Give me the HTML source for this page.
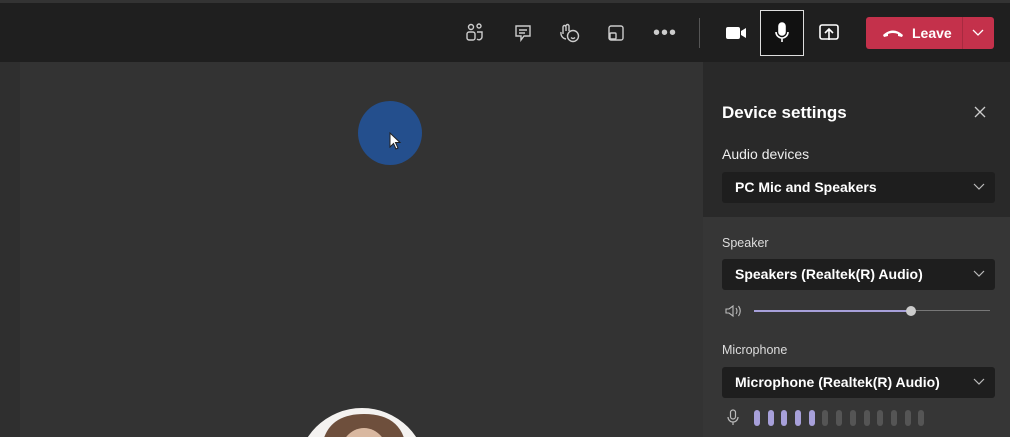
<!DOCTYPE html>
<html style="width:1010px;height:437px;overflow:hidden"><head><style>
html,body{margin:0;width:1010px;height:437px;overflow:hidden}
body{background:#333;font-family:"Liberation Sans",sans-serif;position:relative}
.a{position:absolute}
.top{left:0;top:0;width:1010px;height:62px;background:#1f1f1f;border-top:3px solid #333;box-sizing:border-box}
.dd{position:absolute;left:722px;width:273px;height:31px;background:#1e1e1e;border-radius:3px;color:#fff;font-weight:bold;font-size:14px;line-height:31px;box-sizing:border-box;padding-left:13px}
.dd svg{position:absolute;right:10px;top:11px}
.lbl{color:#ddd;font-size:12.5px;position:absolute;left:722px}
</style></head><body>
<div class="a top"></div>
<div class="a" style="left:0;top:62px;width:20px;height:375px;background:#2f2f2f"></div>
<div class="a" style="left:703px;top:62px;width:307px;height:155px;background:#292929"></div>
<div class="a" style="left:703px;top:217px;width:307px;height:220px;background:#363636"></div>
<div class="a" style="left:358px;top:101px;width:64px;height:64px;border-radius:50%;background:#244f8d"></div>
<svg class="a" style="left:389px;top:132px" width="14" height="20" viewBox="0 0 14 20"><path d="M1 1 L1 15 L4.5 11.5 L7 17 L9 16 L6.5 10.5 L11 10.5 Z" fill="#fff" stroke="#222" stroke-width="1"/></svg>
<svg class="a" style="left:297px;top:408px" width="130" height="29" viewBox="0 0 130 29"><circle cx="65" cy="65" r="65" fill="#f4f2f0"/><path d="M24 50 Q24 6 67 6 Q110 6 110 50 V90 H24Z" fill="#6e4f3c"/><ellipse cx="67" cy="50" rx="25" ry="30" fill="#d9b8a0"/></svg>
<svg class="a" style="left:464px;top:22px" width="22" height="22" viewBox="0 0 22 22" fill="none" stroke="#ccc" stroke-width="1.4"><circle cx="7" cy="5" r="2.5"/><circle cx="15" cy="4" r="2"/><rect x="3" y="10" width="8" height="8" rx="2"/><path d="M13 10h5v5a3 3 0 0 1-5 2"/></svg>
<svg class="a" style="left:513px;top:23px" width="20" height="20" viewBox="0 0 20 20" fill="none" stroke="#ccc" stroke-width="1.4"><path d="M3 3h14v10h-6l-3 4v-4H3z"/><path d="M6 7h8M6 10h6"/></svg>
<svg class="a" style="left:558px;top:22px" width="24" height="22" viewBox="0 0 24 22" fill="none" stroke="#ccc" stroke-width="1.4"><path d="M5 12V5a1.5 1.5 0 0 1 3 0v4M8 4a1.5 1.5 0 0 1 3 0v5M3 10a6 6 0 0 0 5 7"/><circle cx="15" cy="14" r="5.5"/><path d="M13 15.5q2 2 4 0"/></svg>
<svg class="a" style="left:606px;top:23px" width="20" height="20" viewBox="0 0 20 20" fill="none" stroke="#ccc" stroke-width="1.4"><rect x="3" y="3" width="14" height="14" rx="2"/><rect x="4" y="10" width="6" height="6" rx="1"/></svg>
<div class="a" style="left:653px;top:30px;color:#ccc;font-size:20px;line-height:6px;letter-spacing:1px">•••</div>
<div class="a" style="left:699px;top:18px;width:1px;height:30px;background:#555"></div>
<svg class="a" style="left:725px;top:25px" width="22" height="16" viewBox="0 0 22 16"><rect x="1" y="2" width="14" height="12" rx="2" fill="#fff"/><path d="M16 6l5-3v10l-5-3z" fill="#fff"/></svg>
<div class="a" style="left:760px;top:10px;width:44px;height:46px;border:1.5px solid #ddd;box-sizing:border-box;background:#111"></div>
<svg class="a" style="left:772px;top:21px" width="20" height="24" viewBox="0 0 20 24" fill="none" stroke="#fff" stroke-width="1.6"><rect x="7" y="2" width="6" height="12" rx="3" fill="#fff"/><path d="M4 11a6 6 0 0 0 12 0M10 17v4"/></svg>
<svg class="a" style="left:818px;top:23px" width="22" height="20" viewBox="0 0 22 20" fill="none" stroke="#fff" stroke-width="1.6"><rect x="2" y="2" width="18" height="14" rx="2"/><path d="M11 17V7M7 10l4-4 4 4"/></svg>
<div class="a" style="left:866px;top:17px;width:128px;height:32px;background:#c4314b;border-radius:3px"></div>
<div class="a" style="left:962px;top:17px;width:1px;height:32px;background:#a82a40"></div>
<svg class="a" style="left:882px;top:28px" width="22" height="10" viewBox="0 0 22 10"><path d="M1 7q10-9 20 0l-1 2-4-1v-2q-5-2-10 0v2l-4 1z" fill="#fff"/></svg>
<div class="a" style="left:912px;top:25px;color:#fff;font-weight:bold;font-size:14px">Leave</div>
<svg class="a" style="left:972px;top:29px" width="12" height="8" viewBox="0 0 12 8" fill="none" stroke="#fff" stroke-width="1.3"><path d="M1 1l5 5 5-5"/></svg>
<div class="a" style="left:722px;top:103px;color:#fff;font-weight:bold;font-size:17px">Device settings</div>
<svg class="a" style="left:974px;top:106px" width="12" height="12" viewBox="0 0 12 12" stroke="#ccc" stroke-width="1.3"><path d="M1 1l10 10M11 1L1 11"/></svg>
<div class="a" style="left:722px;top:146px;color:#eee;font-size:14px">Audio devices</div>
<div class="dd" style="top:172px">PC Mic and Speakers<svg width="12" height="8" viewBox="0 0 12 8" fill="none" stroke="#bbb" stroke-width="1.2"><path d="M1 1l5 5 5-5"/></svg></div>
<div class="lbl" style="top:236px">Speaker</div>
<div class="dd" style="top:259px">Speakers (Realtek(R) Audio)<svg width="12" height="8" viewBox="0 0 12 8" fill="none" stroke="#bbb" stroke-width="1.2"><path d="M1 1l5 5 5-5"/></svg></div>
<svg class="a" style="left:725px;top:304px" width="18" height="14" viewBox="0 0 18 14" fill="none" stroke="#bbb" stroke-width="1.1"><path d="M1 5h3l4-3v10l-4-3H1z"/><path d="M11 4q2 3 0 6M13.5 2q3.5 5 0 10"/></svg>
<div class="a" style="left:754px;top:310px;width:158px;height:2px;background:#a7a0da"></div>
<div class="a" style="left:912px;top:310px;width:78px;height:1px;background:#777"></div>
<div class="a" style="left:906px;top:306px;width:10px;height:10px;border-radius:50%;background:#ccc"></div>
<div class="lbl" style="top:343px">Microphone</div>
<div class="dd" style="top:367px">Microphone (Realtek(R) Audio)<svg width="12" height="8" viewBox="0 0 12 8" fill="none" stroke="#bbb" stroke-width="1.2"><path d="M1 1l5 5 5-5"/></svg></div>
<svg class="a" style="left:727px;top:409px" width="12" height="18" viewBox="0 0 12 18" fill="none" stroke="#bbb" stroke-width="1.2"><rect x="3.5" y="1" width="5" height="9" rx="2.5"/><path d="M1 8a5 5 0 0 0 10 0M6 13v3"/></svg>
<div class="a" style="left:754px;top:410px;display:flex;gap:7.7px">
<i style="width:6px;height:16px;border-radius:3px;background:#a7a0da;display:block"></i><i style="width:6px;height:16px;border-radius:3px;background:#a7a0da;display:block"></i><i style="width:6px;height:16px;border-radius:3px;background:#a7a0da;display:block"></i><i style="width:6px;height:16px;border-radius:3px;background:#a7a0da;display:block"></i><i style="width:6px;height:16px;border-radius:3px;background:#a7a0da;display:block"></i><i style="width:6px;height:16px;border-radius:3px;background:#555;display:block"></i><i style="width:6px;height:16px;border-radius:3px;background:#555;display:block"></i><i style="width:6px;height:16px;border-radius:3px;background:#555;display:block"></i><i style="width:6px;height:16px;border-radius:3px;background:#555;display:block"></i><i style="width:6px;height:16px;border-radius:3px;background:#555;display:block"></i><i style="width:6px;height:16px;border-radius:3px;background:#555;display:block"></i><i style="width:6px;height:16px;border-radius:3px;background:#555;display:block"></i><i style="width:6px;height:16px;border-radius:3px;background:#555;display:block"></i>
</div>
</body></html>
